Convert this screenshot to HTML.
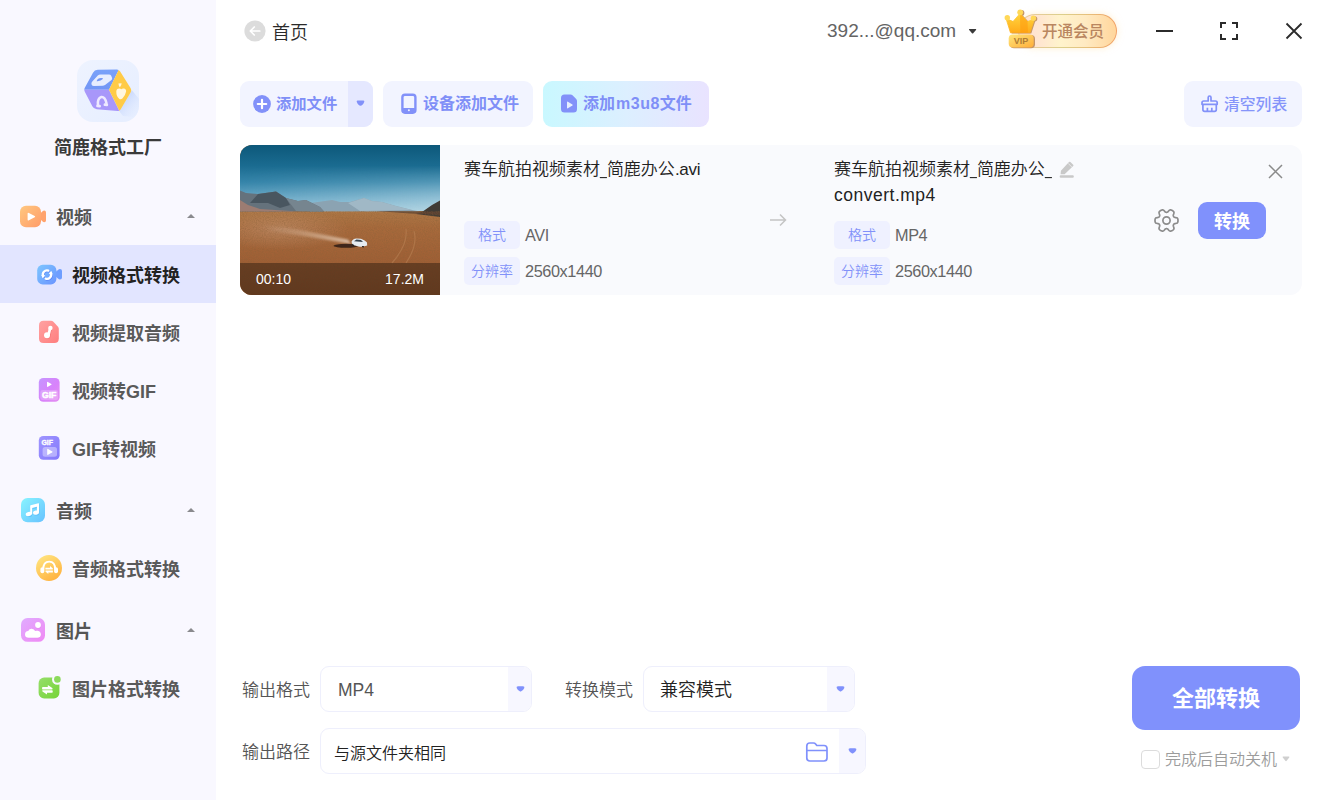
<!DOCTYPE html>
<html lang="zh-CN">
<head>
<meta charset="utf-8">
<title>简鹿格式工厂</title>
<style>
*{box-sizing:border-box;margin:0;padding:0}
html,body{width:1326px;height:800px;overflow:hidden;background:#fff}
body{font-family:"Liberation Sans","Noto Sans CJK SC",sans-serif;font-weight:350;color:#333;position:relative}
.abs{position:absolute}
.t{position:absolute;white-space:nowrap;line-height:1}
#side{position:absolute;left:0;top:0;width:216px;height:800px;background:#f9f8ff}
#sel{position:absolute;left:0;top:245px;width:216px;height:58px;background:#e2e5ff}
.sec{font-size:18px;font-weight:700;color:#555}
.item{font-size:18px;font-weight:700;color:#5a5a5a}
.item.on{font-weight:700;color:#222}
.tri{position:absolute;width:0;height:0;border-left:4px solid transparent;border-right:4px solid transparent;border-bottom:4px solid #8a8a8e}
.btn{position:absolute;top:81px;height:46px;border-radius:9px;background:#f2f4ff}
.btxt{font-size:15px;font-weight:700;color:#7f8ff7}
.tag{position:absolute;width:56px;height:28px;border-radius:5px;background:#eff1ff;color:#8291f9;font-size:14px;text-align:center;line-height:28px}
.val{font-size:16.300px;letter-spacing:-.400px;color:#666}
.lab{font-size:17px;color:#555}
.box{position:absolute;height:46px;border:1px solid #eeeffc;border-radius:9px;background:#fff;overflow:hidden}
.box .dd{position:absolute;right:0;top:0;bottom:0;width:23px;background:#f7f7ff}
.car{position:absolute;width:0;height:0;border-left:4px solid transparent;border-right:4px solid transparent;border-top:5px solid #7f8ff7;border-radius:2px}
</style>
</head>
<body>
<!-- SIDEBAR -->
<div id="side">
  <div id="sel"></div>
  <!-- logo -->
  <svg class="abs" style="left:77px;top:60px" width="62" height="62" viewBox="0 0 62 62">
    <defs>
      <linearGradient id="lgbg" x1="0" y1="0" x2="1" y2="1"><stop offset="0" stop-color="#eef3ff"/><stop offset="1" stop-color="#e6eeff"/></linearGradient>
      <linearGradient id="lgsh" x1="0.200" y1="0" x2="1" y2=".8"><stop offset="0" stop-color="#bccffb"/><stop offset=".8" stop-color="#dfe9ff" stop-opacity=".3"/><stop offset="1" stop-color="#e6eeff" stop-opacity="0"/></linearGradient>
      <linearGradient id="lgb" x1="0" y1="0" x2="0" y2="1"><stop offset="0" stop-color="#7ca6fb"/><stop offset="1" stop-color="#7296f5"/></linearGradient>
      <clipPath id="lgc"><rect width="62" height="62" rx="16"/></clipPath>
      <clipPath id="lgh"><path d="M7.8 31.7 Q6.8 29.7 7.8 27.8 L16.0 12.7 Q17.5 9.9 20.7 9.8 L39.9 9.5 Q41.9 9.5 43.0 11.2 L53.5 28.0 Q54.9 30.2 53.6 32.4 L43.6 49.6 Q42.6 51.3 40.6 51.1 L19.7 49.3 Q16.7 49.0 15.3 46.3 Z"/></clipPath>
    </defs>
    <rect width="62" height="62" rx="16" fill="url(#lgbg)"/>
    <path d="M42.300 51.300 L54.900 30.200 L66 44 L66 58 L46 56 Z" fill="url(#lgsh)" clip-path="url(#lgc)"/>
    <g clip-path="url(#lgh)"><path d="M0 29.700 L17.500 0 L41.900 9.500 L32 29.700 Z" fill="url(#lgb)"/><path d="M0 29.700 L32 29.700 L42.600 51.300 L42.600 60 L0 60 Z" fill="#a897fa"/><path d="M41.900 0 L62 30.200 L42.600 60 L42.600 51.300 L32 29.700 L41.900 9.500 Z" fill="#ffcb47"/></g>
    <path d="M14.400 23.900 Q14.300 22.500 15.500 21.300 L20.800 15.500 Q21.900 14.400 23.400 14.400 L32 14.400 Q33.500 14.400 34.200 15.800 L35 17.800 Q35.500 19 34.500 19.900 L28 25 Q27 25.800 25.700 25.800 L16.800 26.100 Q14.600 26 14.400 23.900 Z" fill="#e7edfe"/>
    <path d="M19.700 20.900 Q20.500 18.300 24 18 Q26.800 17.900 25.800 19 Q24 20.800 20.500 21.300 Q19.600 21.400 19.700 20.900 Z" fill="#7497f6"/>
    <path d="M21 45.200 Q20.200 38.200 24.300 37 Q28 36.600 29.500 43.200" fill="none" stroke="#eee9ff" stroke-width="2.500" stroke-linecap="round"/>
    <rect x="19.200" y="44.700" width="4.800" height="2.700" rx="1.200" fill="#eee9ff" transform="rotate(6 21.600 46)"/>
    <rect x="26.600" y="43.300" width="4.600" height="2.900" rx="1.200" fill="#eee9ff" transform="rotate(6 28.900 44.700)"/>
    <path d="M39.300 31.500 Q39.400 28.600 42.300 28.500 Q43.700 28.600 44.300 29.200 Q45.200 28.400 46.800 28.600 Q49.300 29 49.100 31.600 Q48.600 35.200 45.400 38.400 Q44 39.600 42.400 39 Q39.200 36.500 39.300 31.500 Z M41.400 23.600 L44.600 23.300 Q44.600 25.800 42.900 27.200 Q41.600 25.800 41.400 23.600 Z" fill="#fff6de"/>
  </svg>
  <div class="t" id="appname" style="left:0;width:216px;text-align:center;top:139px;font-size:18px;font-weight:700;color:#3a3a3a">简鹿格式工厂</div>

  <!-- section: video -->
  <svg class="abs" style="left:20px;top:205px" width="27" height="23" viewBox="0 0 27 23">
    <defs><linearGradient id="gv" x1="0" y1="0" x2="1" y2="1"><stop offset="0" stop-color="#ffc880"/><stop offset="1" stop-color="#ff9c69"/></linearGradient></defs>
    <path d="M20 8.800 L22.600 6.300 Q23.300 5.600 24.300 5.600 Q26 5.600 26 7.400 L26 15.400 Q26 17.200 24.300 17.200 Q23.300 17.200 22.600 16.500 L20 14 Z" fill="#ffa36d"/>
    <rect x="0" y="0.800" width="21" height="21.400" rx="6" fill="url(#gv)"/>
    <path d="M7.600 8.800 Q7.600 7.300 8.900 8 L14.700 10.900 Q15.700 11.600 14.700 12.300 L8.900 15.200 Q7.600 15.900 7.600 14.400 Z" fill="#fff"/>
  </svg>
  <div class="t sec" id="s1" style="left:56px;top:209px">视频</div>
  <div class="tri" style="left:187px;top:214px"></div>

  <!-- item 1 -->
  <svg class="abs" style="left:37px;top:264px" width="26" height="21" viewBox="0 0 26 21">
    <defs><linearGradient id="gb" x1="0" y1="0" x2="1" y2="1"><stop offset="0" stop-color="#7dc6ff"/><stop offset="1" stop-color="#6a94ff"/></linearGradient></defs>
    <path d="M18.500 8 L21 6 Q21.800 5 23 5 Q25 5 25 7 L25 13.600 Q25 15.600 23 15.600 Q21.800 15.600 21 14.600 L18.500 12.600 Z" fill="#6e9eff"/>
    <rect x="0.200" y="0.800" width="19.200" height="19.600" rx="5.500" fill="url(#gb)"/>
    <g fill="none" stroke="#4a6cf0" stroke-width="2.300" stroke-linecap="round" opacity=".55" transform="translate(.5,.8)"><path d="M6.200 12.300 A4.200 4.200 0 0 1 11.300 6.600"/><path d="M13.800 8.900 A4.200 4.200 0 0 1 8.700 14.600"/></g>
    <g fill="none" stroke="#fff" stroke-width="2.300" stroke-linecap="round"><path d="M6.200 12.300 A4.200 4.200 0 0 1 11.300 6.600"/><path d="M13.800 8.900 A4.200 4.200 0 0 1 8.700 14.600"/></g>
    <path d="M4.300 10.900 L8.300 11.300 L5.600 14.300 Z M15.700 10.300 L11.700 9.900 L14.400 6.900 Z" fill="#fff"/>
  </svg>
  <div class="t item on" id="i1" style="left:72px;top:267px">视频格式转换</div>

  <!-- item 2 -->
  <svg class="abs" style="left:39px;top:320px" width="21" height="24" viewBox="0 0 21 24">
    <defs><linearGradient id="gr" x1="0" y1="0" x2="1" y2="1"><stop offset="0" stop-color="#ffa2a2"/><stop offset="1" stop-color="#ff7e7e"/></linearGradient></defs>
    <path d="M4.500 0.800 L12 0.800 Q13.400 0.800 14.400 1.800 L18.800 6.500 Q19.800 7.600 19.800 9 L19.800 18.500 Q19.800 23 15.300 23 L4.500 23 Q0 23 0 18.500 L0 5.300 Q0 0.800 4.500 0.800 Z" fill="url(#gr)"/>
    <path d="M11.200 8 L9.600 14.500" stroke="#e95f5f" stroke-width="2.800" stroke-linecap="round" opacity=".35" transform="translate(.6,.8)"/>
    <circle cx="8.600" cy="16" r="3" fill="#e95f5f" opacity=".3"/>
    <path d="M11.200 8 L9.600 14.500" stroke="#fff" stroke-width="2.700" stroke-linecap="round"/>
    <circle cx="11.400" cy="7.900" r="2.200" fill="#fff"/>
    <circle cx="8" cy="15.200" r="3" fill="#fff"/>
  </svg>
  <div class="t item" id="i2" style="left:72px;top:325px">视频提取音频</div>

  <!-- item 3 -->
  <svg class="abs" style="left:38px;top:378px" width="22" height="25" viewBox="0 0 22 25">
    <defs><linearGradient id="gp" x1="0" y1="0" x2="1" y2="1"><stop offset="0" stop-color="#c596ff"/><stop offset=".55" stop-color="#d882fb"/><stop offset="1" stop-color="#e58ff0"/></linearGradient></defs>
    <rect x="0.800" y="0" width="20.800" height="23.800" rx="4.500" fill="url(#gp)"/>
    <path d="M9 4.600 Q9 3.500 9.900 4 L13.300 6 Q13.900 6.400 13.300 6.800 L9.900 8.800 Q9 9.300 9 8.200 Z" fill="#fff"/>
    <rect x="2.300" y="12" width="17.800" height="10" rx="2.200" fill="#fff" opacity=".22"/>
    <text x="11.200" y="19.800" font-size="9.200" font-weight="700" fill="#fff" stroke="#fff" stroke-width=".5" text-anchor="middle" font-family="Liberation Sans, sans-serif" textLength="14.500" lengthAdjust="spacingAndGlyphs">GIF</text>
  </svg>
  <div class="t item" id="i3" style="left:72px;top:383px">视频转GIF</div>

  <!-- item 4 -->
  <svg class="abs" style="left:38px;top:436px" width="22" height="25" viewBox="0 0 22 25">
    <defs><linearGradient id="gq" x1="0" y1="0" x2="1" y2="1"><stop offset="0" stop-color="#a096ff"/><stop offset="1" stop-color="#8378fb"/></linearGradient></defs>
    <rect x="0.800" y="0" width="20.800" height="23.800" rx="4.500" fill="url(#gq)"/>
    <text x="9.200" y="9" font-size="7.800" font-weight="700" fill="#fff" stroke="#fff" stroke-width=".4" text-anchor="middle" font-family="Liberation Sans, sans-serif" textLength="11.500" lengthAdjust="spacingAndGlyphs">GIF</text>
    <rect x="4.600" y="11" width="14.400" height="9.800" rx="2.500" fill="#fff" opacity=".38"/>
    <path d="M9.200 13.600 Q9.200 12.500 10.100 13 L14.300 15.500 Q14.900 15.900 14.300 16.300 L10.100 18.800 Q9.200 19.300 9.200 18.200 Z" fill="#fff"/>
  </svg>
  <div class="t item" id="i4" style="left:72px;top:441px">GIF转视频</div>

  <!-- section: audio -->
  <svg class="abs" style="left:21px;top:498px" width="24" height="25" viewBox="0 0 24 25">
    <defs><linearGradient id="ga" x1="0" y1="0" x2="1" y2="1"><stop offset="0" stop-color="#88f4ff"/><stop offset="1" stop-color="#68c2ff"/></linearGradient></defs>
    <rect width="24" height="24.200" rx="6.500" fill="url(#ga)"/>
    <g fill="#3aa0f0" opacity=".35" transform="translate(.5,.9)"><path d="M9.200 7.600 L18 5.200 L18 14.600 L15.800 14.600 L15.800 9 L11 10.300 L11 16 L9.200 16 Z"/><ellipse cx="7.600" cy="16" rx="3" ry="2.100"/><ellipse cx="14.800" cy="14.600" rx="3" ry="2.100"/></g>
    <path d="M9.200 7.800 Q9.200 7.400 9.700 7.300 L17.400 5.200 Q18 5.100 18 5.700 L18 14.600 L15.900 14.600 L15.900 8.800 L11.200 10.100 L11.200 16 L9.200 16 Z" fill="#fff"/>
    <ellipse cx="7.800" cy="16" rx="3.100" ry="2.100" fill="#fff" transform="rotate(-12 7.800 16)"/>
    <ellipse cx="15" cy="14.600" rx="3" ry="2.100" fill="#fff" transform="rotate(-12 15 14.600)"/>
  </svg>
  <div class="t sec" id="s2" style="left:56px;top:503px">音频</div>
  <div class="tri" style="left:187px;top:508px"></div>

  <!-- item 5 -->
  <svg class="abs" style="left:36px;top:555px" width="26" height="26" viewBox="0 0 26 26">
    <defs><linearGradient id="gy" x1="0.200" y1="0" x2=".8" y2="1"><stop offset="0" stop-color="#ffe480"/><stop offset="1" stop-color="#ffb03c"/></linearGradient></defs>
    <circle cx="13" cy="13" r="13" fill="url(#gy)"/>
    <path d="M7.200 14.500 Q7.200 6.600 13.200 6.600 Q19.200 6.600 19.200 14.500" fill="none" stroke="#fff" stroke-width="1.900"/>
    <rect x="4.400" y="12.200" width="3.900" height="6" rx="1.900" fill="#fff"/>
    <rect x="18.100" y="12.200" width="3.900" height="6" rx="1.900" fill="#fff"/>
    <path d="M9.400 12.700 L14 12.700 L14 11 L16.900 13.500 Q17.200 14.400 16.400 14.500 L9.400 14.500 Z M16.900 17.400 L12.300 17.400 L12.300 19 L9.400 16.600 Q9.100 15.700 9.900 15.600 L16.900 15.600 Z" fill="#fff"/>
  </svg>
  <div class="t item" id="i5" style="left:72px;top:561px">音频格式转换</div>

  <!-- section: image -->
  <svg class="abs" style="left:21px;top:618px" width="24" height="24" viewBox="0 0 24 24">
    <defs><linearGradient id="gi" x1="0" y1="0" x2="1" y2="1"><stop offset="0" stop-color="#e0acff"/><stop offset="1" stop-color="#f088f4"/></linearGradient></defs>
    <rect width="24" height="23.800" rx="6.500" fill="url(#gi)"/>
    <circle cx="17.300" cy="7.700" r="2.900" fill="#d060e0" opacity=".3"/>
    <path d="M7.500 20.300 Q4 20.300 4 17 Q4 14 7.200 13.700 Q8.300 11.500 10.700 11.600 Q13 11.700 13.900 13.800 Q15 13.200 16.500 13.500 Q19.700 14.200 19.700 17.200 Q19.500 20.300 16.200 20.300 Z" fill="#d060e0" opacity=".3"/>
    <circle cx="17" cy="7" r="2.900" fill="#fff"/>
    <path d="M7.500 19.800 Q4 19.800 4 16.500 Q4 13.400 7.200 13.100 Q8.300 10.700 10.800 10.800 Q13.200 10.900 14.100 13.100 Q15.200 12.500 16.700 12.800 Q19.900 13.500 19.900 16.600 Q19.700 19.800 16.400 19.800 Z" fill="#fff"/>
  </svg>
  <div class="t sec" id="s3" style="left:56px;top:623px">图片</div>
  <div class="tri" style="left:187px;top:628px"></div>

  <!-- item 6 -->
  <svg class="abs" style="left:38px;top:675px" width="24" height="25" viewBox="0 0 24 25">
    <defs><linearGradient id="gg" x1="0" y1="0" x2="1" y2="1"><stop offset="0" stop-color="#96de6a"/><stop offset="1" stop-color="#76d438"/></linearGradient></defs>
    <rect x="0.600" y="2.600" width="20.800" height="20.800" rx="5.500" fill="url(#gg)"/>
    <circle cx="19.400" cy="4.400" r="5.400" fill="#f9f8ff"/>
    <circle cx="19.400" cy="4.400" r="3.300" fill="#8cda5c"/>
    <path d="M4.400 12 L9.800 12 L9.800 9.900 L14.300 13.100 Q15 13.800 14.200 14.400 L4.400 14.400 Q3.600 13.200 4.400 12 Z M14.400 17.700 L9 17.700 L9 19.400 L4.500 16.500 Q3.800 15.800 4.600 15.300 L14.400 15.300 Q15.200 16.500 14.400 17.700 Z" fill="#fff"/>
  </svg>
  <div class="t item" id="i6" style="left:72px;top:681px">图片格式转换</div>
</div>

<!-- TOPBAR -->
<div id="top">
  <svg class="abs" style="left:244px;top:20px" width="22" height="22" viewBox="0 0 22 22">
    <circle cx="11" cy="11" r="10.600" fill="#dcdcdc"/>
    <path d="M15.800 11 L6.500 11 M10.300 7 L6.300 11 L10.300 15" fill="none" stroke="#fff" stroke-width="1.700" stroke-linecap="round" stroke-linejoin="round"/>
  </svg>
  <div class="t" id="home" style="left:272px;top:24px;font-size:18px;color:#2a2a2a">首页</div>
  <div class="t" id="mail" style="left:827px;top:21px;font-size:19px;color:#646464">392...@qq.com</div>
  <svg class="abs" style="left:968px;top:28px" width="9" height="7" viewBox="0 0 9 7"><path d="M1.400 1 L7.800 1 Q8.600 1.100 8 1.900 L5.200 5.300 Q4.600 5.900 4 5.300 L1.200 1.900 Q0.600 1.100 1.400 1 Z" fill="#3a3a3a"/></svg>

  <!-- VIP badge -->
  <div class="abs" style="left:1018px;top:14px;width:99px;height:34px;border-radius:17px;background:linear-gradient(90deg,#ecc9a0 0%,#dccf8c 45%,#e6c07c 70%,#f2a064 100%);box-shadow:0 0 7px rgba(255,226,170,.55)"></div>
  <div class="abs" style="left:1019.200px;top:15.200px;width:96.600px;height:31.600px;border-radius:16px;background:linear-gradient(90deg,#ffe0d0 0%,#ffe6d0 22%,#fff3cc 42%,#ffeac2 68%,#ffd69c 100%)"></div>
  <svg class="abs" style="left:1003px;top:8px" width="38" height="42" viewBox="0 0 38 42">
    <defs>
      <linearGradient id="cr" x1="0" y1="0" x2="0" y2="1"><stop offset="0" stop-color="#ffd640"/><stop offset="1" stop-color="#ffab1a"/></linearGradient>
      <linearGradient id="vp" x1="0" y1="0" x2="1" y2="1"><stop offset="0" stop-color="#ffe67c"/><stop offset="1" stop-color="#ffad38"/></linearGradient>
    </defs>
    <g fill="#c39468" transform="translate(1.300,.6)">
      <path d="M3 10.500 L10 13.500 L17 5.500 L24.500 13.500 L31.500 11 L27 24.800 L7.500 24.800 Z"/>
      <circle cx="17.200" cy="4.300" r="2.900"/><circle cx="30.400" cy="10.200" r="2.600"/>
      <rect x="5.700" y="26.400" width="25" height="13.200" rx="4"/>
    </g>
    <path d="M3 10.500 L10 13.500 L17 5.500 L24.500 13.500 L31.500 11 L27 24.800 L7.500 24.800 Z" fill="url(#cr)" stroke="url(#cr)" stroke-width=".8" stroke-linejoin="round"/>
    <path d="M17 5.500 L24.500 13.500 L25 24.800 L17.300 24.800 Z" fill="#ff9a0c" opacity=".55"/>
    <circle cx="4.300" cy="9.700" r="2.700" fill="#ffd858"/>
    <circle cx="17.200" cy="4.300" r="2.900" fill="#ffd858"/>
    <circle cx="30.400" cy="10.200" r="2.700" fill="#ffd858"/>
    <rect x="5.700" y="26.400" width="25" height="13.200" rx="4" fill="url(#vp)"/>
    <text x="18" y="36.300" font-size="9.500" font-weight="700" fill="#b07c34" text-anchor="middle" font-family="Liberation Sans, sans-serif" textLength="14.500" lengthAdjust="spacingAndGlyphs">VIP</text>
  </svg>
  <div class="t" id="vip" style="left:1042px;top:24px;font-size:15.500px;font-weight:500;color:#b98660">开通会员</div>

  <!-- window controls -->
  <div class="abs" style="left:1156px;top:30px;width:17px;height:2px;background:#2b2b2b"></div>
  <svg class="abs" style="left:1220px;top:22px" width="18" height="18" viewBox="0 0 18 18"><path d="M1 6 L1 1 L6 1 M12 1 L17 1 L17 6 M17 12 L17 17 L12 17 M6 17 L1 17 L1 12" fill="none" stroke="#2b2b2b" stroke-width="2"/></svg>
  <svg class="abs" style="left:1285px;top:22px" width="18" height="18" viewBox="0 0 18 18"><path d="M1.500 1.500 L16.500 16.500 M16.500 1.500 L1.500 16.500" fill="none" stroke="#2b2b2b" stroke-width="1.800"/></svg>
</div>

<!-- TOOLBAR -->
<div id="tools">
  <div class="btn" style="left:240px;width:133px;overflow:hidden"><div class="abs" style="left:108px;top:0;width:25px;height:46px;background:#e5e8ff"></div></div>
  <svg class="abs" style="left:253px;top:95px" width="18" height="18" viewBox="0 0 18 18"><circle cx="9" cy="9" r="8.900" fill="#8291f9"/><path d="M9 4.800 L9 13.200 M4.800 9 L13.200 9" stroke="#fff" stroke-width="2.200" stroke-linecap="round"/></svg>
  <div class="t btxt" id="b1" style="left:276px;top:96px;font-size:15.300px">添加文件</div>
  <svg class="abs" style="left:356px;top:100px" width="9" height="7" viewBox="0 0 9 7"><path d="M1.500 0.600 L7.500 0.600 Q8.800 0.900 8.200 2 Q6.600 5.800 4.500 5.800 Q2.400 5.800 0.800 2 Q0.200 0.900 1.500 0.600 Z" fill="#8291f9"/></svg>

  <div class="btn" style="left:383px;width:150px"></div>
  <svg class="abs" style="left:401px;top:93px" width="16" height="21" viewBox="0 0 16 21"><rect x="1.400" y="1.700" width="13" height="18" rx="2.600" fill="none" stroke="#8291f9" stroke-width="2.400"/><rect x="1.400" y="15" width="13" height="4.700" rx="1" fill="#8291f9"/><circle cx="7.900" cy="17.300" r="1" fill="#f2f4ff"/></svg>
  <div class="t btxt" id="b2" style="left:423px;top:96px;font-size:16px">设备添加文件</div>

  <div class="btn" style="left:543px;width:166px;background:linear-gradient(90deg,#c9f8ff 0%,#dcefff 50%,#e9e3ff 100%)"></div>
  <svg class="abs" style="left:561px;top:94px" width="17" height="19" viewBox="0 0 17 19"><path d="M3.500 0.500 L9.500 0.500 Q10.700 0.500 11.500 1.300 L15.200 5 Q16 5.800 16 7 L16 15 Q16 18.500 12.500 18.500 L3.500 18.500 Q0 18.500 0 15 L0 4 Q0 0.500 3.500 0.500 Z" fill="#8291f9"/><path d="M6 8.200 Q6 7.200 6.900 7.700 L11.400 10.500 Q12.100 11 11.400 11.500 L6.900 14.300 Q6 14.800 6 13.800 Z" fill="#e6f0ff"/></svg>
  <div class="t btxt" id="b3" style="left:583px;top:96px;font-size:16px">添加<span style="letter-spacing:.500px;margin-left:1px">m3u8</span>文件</div>

  <div class="btn" style="left:1184px;width:118px"></div>
  <svg class="abs" style="left:1201px;top:95px" width="18" height="18" viewBox="0 0 18 18"><path d="M7.200 6 L7.200 2.400 Q7.200 1 8.600 1 Q10 1 10 2.400 L10 6 L14.500 6 Q16.200 6 16.200 7.700 L16.200 9.300 L1 9.300 L1 7.700 Q1 6 2.700 6 Z M1.900 9.300 L1.900 14.500 Q1.900 16.300 3.700 16.300 L13.500 16.300 Q15.300 16.300 15.300 14.500 L15.300 9.300 M6.400 16 L6.400 12.800 M10.800 16 L10.800 12.800" fill="none" stroke="#8291f9" stroke-width="1.700" stroke-linejoin="round"/></svg>
  <div class="t" id="b4" style="left:1224px;top:97px;font-size:15.800px;font-weight:500;color:#8594fa">清空列表</div>
</div>

<!-- CARD -->
<div id="card">
  <div class="abs" style="left:240px;top:145px;width:1062px;height:150px;border-radius:12px;background:#f9fafd"></div>
  <!-- thumbnail -->
  <div class="abs" id="thumb" style="left:240px;top:145px;width:200px;height:150px;border-radius:12px 0 0 12px;overflow:hidden;background:#a5652f">
    <svg width="200" height="150" viewBox="0 0 200 150" style="display:block">
      <defs>
        <linearGradient id="sky" x1="0" y1="0" x2="0" y2="1"><stop offset="0" stop-color="#0d587a"/><stop offset=".3" stop-color="#1a6b90"/><stop offset=".55" stop-color="#3685aa"/><stop offset=".8" stop-color="#6eabc8"/><stop offset="1" stop-color="#9ac6d9"/></linearGradient>
        <linearGradient id="skyr" x1="0" y1="0" x2="1" y2="0"><stop offset="0" stop-color="#bfe0ea" stop-opacity="0"/><stop offset="1" stop-color="#cfe6ee" stop-opacity=".55"/></linearGradient>
        <linearGradient id="skym" x1="0" y1="0" x2="0" y2="1"><stop offset="0" stop-color="#fff" stop-opacity="0"/><stop offset=".3" stop-color="#fff" stop-opacity="0"/><stop offset="1" stop-color="#fff" stop-opacity="1"/></linearGradient>
        <mask id="mk"><rect width="200" height="68" fill="url(#skym)"/></mask>
        <linearGradient id="gnd" x1="0" y1="0" x2="0" y2="1"><stop offset="0" stop-color="#ae7846"/><stop offset=".2" stop-color="#a86a3c"/><stop offset=".6" stop-color="#9f5f35"/><stop offset="1" stop-color="#94562e"/></linearGradient>
        <radialGradient id="gl" cx="40" cy="84" r="70" gradientUnits="userSpaceOnUse" gradientTransform="translate(40 84) scale(1 .3) translate(-40 -84)"><stop offset="0" stop-color="#c99c7c" stop-opacity=".5"/><stop offset="1" stop-color="#c99c7c" stop-opacity="0"/></radialGradient>
        <linearGradient id="dust" x1="0" y1="0" x2="1" y2="0"><stop offset="0" stop-color="#c9a184" stop-opacity="0"/><stop offset=".5" stop-color="#cfa888" stop-opacity=".6"/><stop offset="1" stop-color="#dcc0a8" stop-opacity=".95"/></linearGradient>
        <filter id="nz" x="0" y="0" width="100%" height="100%"><feTurbulence type="fractalNoise" baseFrequency=".9" numOctaves="2" seed="4"/><feColorMatrix values="0 0 0 0 .25  0 0 0 0 .12  0 0 0 0 .04  0 0 0 -1.600 1.050"/></filter>
        <filter id="bl"><feGaussianBlur stdDeviation="1.200"/></filter>
        <filter id="bl2"><feGaussianBlur stdDeviation=".500"/></filter>
      </defs>
      <rect width="200" height="68" fill="url(#sky)"/>
      <rect width="200" height="68" fill="url(#skyr)" mask="url(#mk)"/>
      <rect y="66" width="200" height="84" fill="url(#gnd)"/>
      <rect y="66" width="200" height="84" fill="url(#gl)"/>
      <g filter="url(#bl2)">
      <path d="M70 58 L78 57 L92 55 L100 57 L110 57 L124 53 L132 56 L142 57 L156 61 L172 65 L180 66.500 L70 66.500 Z" fill="#8ba3b2"/>
      <path d="M108 58 L124 53 L132 56 L142 57 L156 61 L172 65 L120 66 Z" fill="#a0b8c6"/>
      <path d="M0 45.500 L6 48 L18 49 L36 46.500 L46 53 L58 56 L66 55 L80 62 L84 66.500 L0 66.500 Z" fill="#65727c"/>
      <path d="M18 49 L36 46.500 L46 53 L50 60 L40 63 L28 58 L10 58 Z" fill="#4a5761"/>
      <path d="M46 53 L58 56 L66 55 L80 62 L84 66.500 L56 66 Z" fill="#76858f"/>
      <path d="M0 55 L8 60 L20 64 L58 66.500 L0 66.500 Z" fill="#9c7c72"/>
      <path d="M182 67 L192 60 L200 55.500 L200 72 L176 69 Z" fill="#403a35"/>
      <path d="M136 66 L200 66.500 L200 70 L170 68.500 Z" fill="#5e4432" opacity=".8"/>
      </g>
      <rect y="66" width="200" height="84" filter="url(#nz)" opacity=".5"/>
      <path d="M22 80 L60 85 L108 94.500 L111 99 L70 92 L30 86 Z" fill="url(#dust)" filter="url(#bl)"/>
      <ellipse cx="106" cy="100.800" rx="12.500" ry="2" fill="#2e1c12" opacity=".85" filter="url(#bl2)"/>
      <path d="M111.500 96.800 Q112.500 93.800 116.500 93.500 L121 93.800 Q125.300 95.200 127 97.600 L127.200 100.600 Q123.500 102.200 118.500 101.500 L112.300 99.800 Z" fill="#e6ecf1"/>
      <path d="M114 96.200 L116.500 94.600 L121 95 L123 97 Z" fill="#34414c"/>
      <path d="M112.500 99 L113.500 101 M122 101.500 L124 101.800" stroke="#222" stroke-width="1.200"/>
      <path d="M166 84 Q168 100 152 118 M174 86 Q178 100 166 118" fill="none" stroke="#c08a5c" stroke-width="1.200" opacity=".45" filter="url(#bl2)"/>
      <rect y="118" width="200" height="32" fill="#000" opacity=".34"/>
    </svg>
    <div class="t" id="dur" style="left:16px;top:127px;font-size:14px;color:#fff">00:10</div>
    <div class="t" id="size" style="right:16px;top:127px;font-size:14px;color:#fff">17.2M</div>
  </div>

  <div class="t" id="fn1" style="left:464px;top:161px;font-size:17px;color:#222">赛车航拍视频素材<span style="display:inline-block;transform:scaleX(.72);transform-origin:0 0;margin-right:-2.600px">_</span>简鹿办公<span style="letter-spacing:-.300px">.avi</span></div>
  <div class="tag" style="left:464px;top:221px">格式</div>
  <div class="t val" id="v1" style="left:525px;top:227px">AVI</div>
  <div class="tag" style="left:464px;top:257px">分辨率</div>
  <div class="t val" id="v2" style="left:525px;top:263px">2560x1440</div>

  <svg class="abs" style="left:769px;top:213px" width="18" height="14" viewBox="0 0 18 14"><path d="M1 7 L16.500 7 M11 1.500 L16.500 7 L11 12.500" fill="none" stroke="#c4c4c4" stroke-width="1.500"/></svg>

  <div class="t" id="fn2" style="left:834px;top:161px;font-size:17px;color:#222">赛车航拍视频素材<span style="display:inline-block;transform:scaleX(.72);transform-origin:0 0;margin-right:-2.600px">_</span>简鹿办公<span style="display:inline-block;transform:scaleX(.72);transform-origin:0 0;margin-right:-2.600px">_</span></div>
  <div class="t" id="fn3" style="left:834px;top:187px;font-size:17.500px;letter-spacing:.500px;color:#222">convert.mp4</div>
  <svg class="abs" style="left:1059px;top:161px" width="16" height="18" viewBox="0 0 16 18"><path d="M1.600 13.300 L1.900 9.700 L10 1 Q10.700 0.300 11.400 1 L14.200 3.700 Q14.900 4.400 14.200 5.100 L5.600 13.200 Z" fill="#c9c9c9"/><path d="M9.300 2.600 L12.900 6" stroke="#f3f3f5" stroke-width=".7"/><rect x="0.700" y="14.200" width="14.100" height="2.600" rx="1" fill="#c9c9c9"/></svg>
  <div class="tag" style="left:834px;top:221px">格式</div>
  <div class="t val" id="v3" style="left:895px;top:227px">MP4</div>
  <div class="tag" style="left:834px;top:257px">分辨率</div>
  <div class="t val" id="v4" style="left:895px;top:263px">2560x1440</div>

  <svg class="abs" style="left:1154px;top:208px" width="25" height="25" viewBox="0 0 25 25">
    <path d="M24.00 12.50 L23.98 13.00 L23.93 13.50 L23.83 13.99 L23.64 14.46 L23.28 14.89 L22.65 15.22 L21.77 15.42 L20.95 15.58 L20.39 15.77 L20.03 16.01 L19.79 16.29 L19.59 16.59 L19.43 16.91 L19.31 17.27 L19.27 17.70 L19.39 18.28 L19.67 19.07 L19.93 19.93 L19.96 20.64 L19.77 21.17 L19.46 21.57 L19.08 21.90 L18.68 22.19 L18.25 22.46 L17.81 22.70 L17.35 22.90 L16.87 23.06 L16.37 23.13 L15.82 23.03 L15.22 22.65 L14.60 21.99 L14.06 21.36 L13.61 20.97 L13.22 20.78 L12.86 20.71 L12.50 20.69 L12.14 20.71 L11.78 20.78 L11.39 20.97 L10.94 21.36 L10.40 21.99 L9.78 22.65 L9.18 23.03 L8.63 23.13 L8.13 23.06 L7.65 22.90 L7.19 22.70 L6.75 22.46 L6.32 22.19 L5.92 21.90 L5.54 21.57 L5.23 21.17 L5.04 20.64 L5.07 19.93 L5.33 19.07 L5.61 18.28 L5.73 17.70 L5.69 17.27 L5.57 16.91 L5.41 16.59 L5.21 16.29 L4.97 16.01 L4.61 15.77 L4.05 15.58 L3.23 15.42 L2.35 15.22 L1.72 14.89 L1.36 14.46 L1.17 13.99 L1.07 13.50 L1.02 13.00 L1.00 12.50 L1.02 12.00 L1.07 11.50 L1.17 11.01 L1.36 10.54 L1.72 10.11 L2.35 9.78 L3.23 9.58 L4.05 9.42 L4.61 9.23 L4.97 8.99 L5.21 8.71 L5.41 8.41 L5.57 8.09 L5.69 7.73 L5.73 7.30 L5.61 6.72 L5.33 5.93 L5.07 5.07 L5.04 4.36 L5.23 3.83 L5.54 3.43 L5.92 3.10 L6.32 2.81 L6.75 2.54 L7.19 2.30 L7.65 2.10 L8.13 1.94 L8.63 1.87 L9.18 1.97 L9.78 2.35 L10.40 3.01 L10.94 3.64 L11.39 4.03 L11.78 4.22 L12.14 4.29 L12.50 4.31 L12.86 4.29 L13.22 4.22 L13.61 4.03 L14.06 3.64 L14.60 3.01 L15.22 2.35 L15.82 1.97 L16.37 1.87 L16.87 1.94 L17.35 2.10 L17.81 2.30 L18.25 2.54 L18.68 2.81 L19.08 3.10 L19.46 3.43 L19.77 3.83 L19.96 4.36 L19.93 5.07 L19.67 5.93 L19.39 6.72 L19.27 7.30 L19.31 7.73 L19.43 8.09 L19.59 8.41 L19.79 8.71 L20.03 8.99 L20.39 9.23 L20.95 9.42 L21.77 9.58 L22.65 9.78 L23.28 10.11 L23.64 10.54 L23.83 11.01 L23.93 11.50 L23.98 12.00 Z" fill="none" stroke="#8c8c8c" stroke-width="1.700" stroke-linejoin="round"/>
    <circle cx="12.500" cy="12.500" r="3.600" fill="none" stroke="#8c8c8c" stroke-width="1.700"/>
  </svg>
  <div class="abs" style="left:1198px;top:202px;width:68px;height:37px;border-radius:9px;background:#8091fc"></div>
  <div class="t" id="cv" style="left:1198px;width:68px;text-align:center;top:213px;font-size:18px;font-weight:700;color:#fff">转换</div>
  <svg class="abs" style="left:1268px;top:164px" width="15" height="15" viewBox="0 0 15 15"><path d="M1 1 L14 14 M14 1 L1 14" stroke="#8a8a8a" stroke-width="1.500" fill="none"/></svg>
</div>

<!-- BOTTOM -->
<div id="bottom">
  <div class="t lab" id="l1" style="left:242px;top:682px">输出格式</div>
  <div class="box" style="left:320px;top:666px;width:212px"><div class="dd"></div></div>
  <div class="t" id="o1" style="left:338px;top:682px;font-size:17.500px;color:#555">MP4</div>
  <svg class="abs" style="left:515px;top:685px" width="11" height="8" viewBox="0 0 11 8"><path d="M3 1.200 L8 1.200 Q9.900 1.200 9.300 2.900 Q8.300 5 6.200 6.300 Q5.500 6.700 4.800 6.300 Q2.700 5 1.700 2.900 Q1.100 1.200 3 1.200 Z" fill="#8091fc"/></svg>

  <div class="t lab" id="l2" style="left:565px;top:682px">转换模式</div>
  <div class="box" style="left:643px;top:666px;width:212px"><div class="dd" style="width:27px"></div></div>
  <div class="t" id="o2" style="left:660px;top:681px;font-size:18px;color:#222">兼容模式</div>
  <svg class="abs" style="left:835px;top:685px" width="11" height="8" viewBox="0 0 11 8"><path d="M3 1.200 L8 1.200 Q9.900 1.200 9.300 2.900 Q8.300 5 6.200 6.300 Q5.500 6.700 4.800 6.300 Q2.700 5 1.700 2.900 Q1.100 1.200 3 1.200 Z" fill="#8091fc"/></svg>

  <div class="t lab" id="l3" style="left:242px;top:744px">输出路径</div>
  <div class="box" style="left:320px;top:728px;width:546px"><div class="dd" style="width:26px"></div></div>
  <div class="t" id="o3" style="left:334px;top:746px;font-size:16px;color:#222">与源文件夹相同</div>
  <svg class="abs" style="left:805px;top:741px" width="24" height="22" viewBox="0 0 24 22"><path d="M1.800 7 L1.800 5 Q1.800 2 4.800 2 L8.500 2 Q9.800 2 10.600 3 L11.800 4.500 L19 4.500 Q22 4.500 22 7.500 L22 17 Q22 20 19 20 L4.800 20 Q1.800 20 1.800 17 Z M1.800 9.500 L22 9.500" fill="none" stroke="#8091fc" stroke-width="1.700" stroke-linejoin="round"/></svg>
  <svg class="abs" style="left:847px;top:747px" width="11" height="8" viewBox="0 0 11 8"><path d="M3 1.200 L8 1.200 Q9.900 1.200 9.300 2.900 Q8.300 5 6.200 6.300 Q5.500 6.700 4.800 6.300 Q2.700 5 1.700 2.900 Q1.100 1.200 3 1.200 Z" fill="#8091fc"/></svg>

  <div class="abs" style="left:1132px;top:666px;width:168px;height:64px;border-radius:13px;background:#8091fc"></div>
  <div class="t" id="all" style="left:1132px;width:168px;text-align:center;top:688px;font-size:22px;font-weight:700;color:#fff">全部转换</div>
  <div class="abs" style="left:1141px;top:750px;width:19px;height:19px;border:1px solid #dcdcdc;border-radius:4px;background:#fff"></div>
  <div class="t" id="shut" style="left:1165px;top:752px;font-size:16px;font-weight:350;color:#9c9c9c">完成后自动关机</div>
  <svg class="abs" style="left:1282px;top:756px" width="8" height="6" viewBox="0 0 8 6"><path d="M1.200 0.600 L6.800 0.600 Q7.800 0.800 7.200 1.600 L4.700 4.800 Q4 5.500 3.300 4.800 L0.800 1.600 Q0.200 0.800 1.200 0.600 Z" fill="#cfcfcf"/></svg>
</div>
</body>
</html>
